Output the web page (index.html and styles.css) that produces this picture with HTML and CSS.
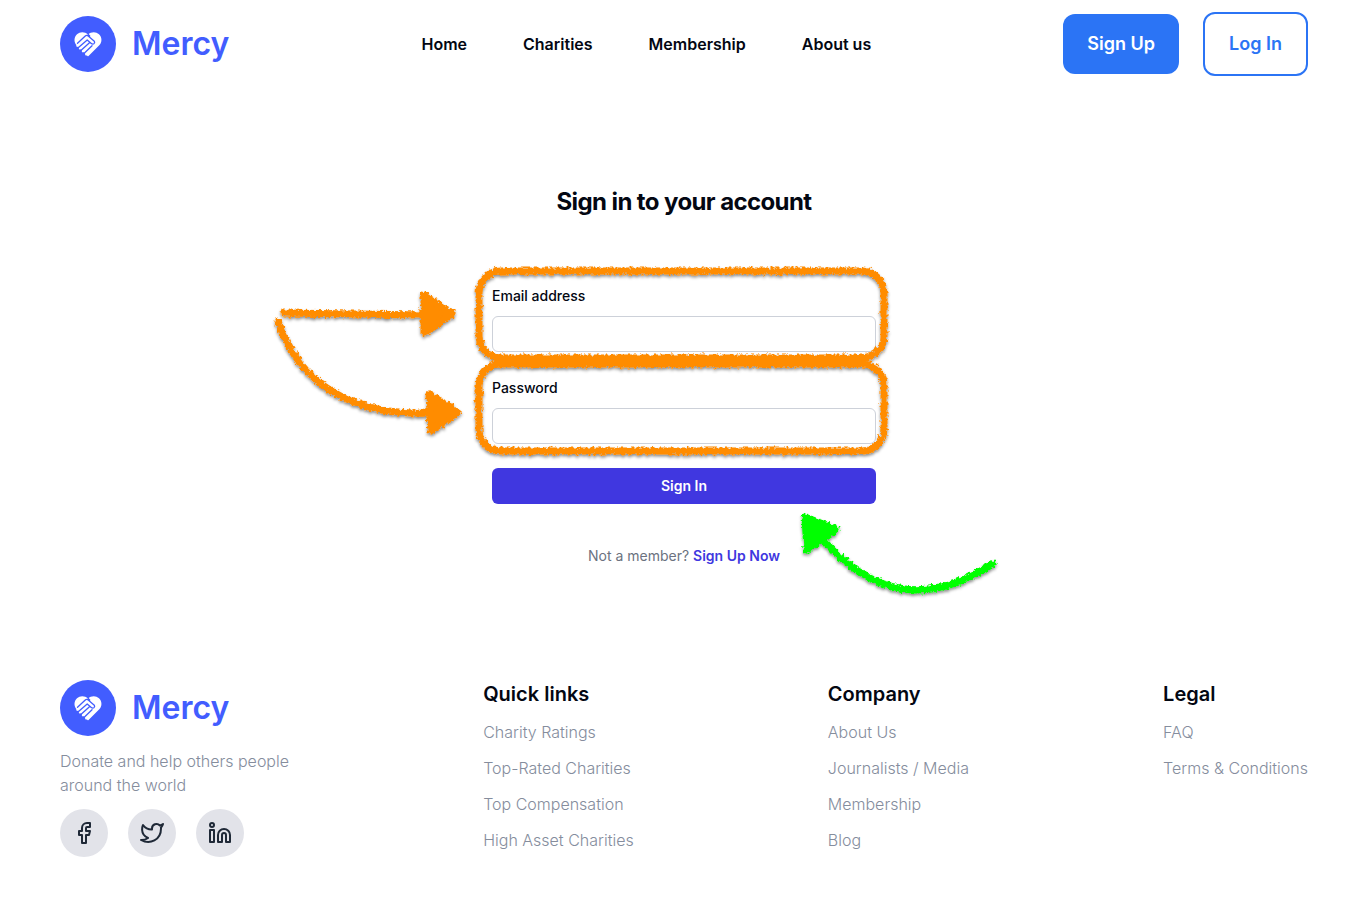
FILE: index.html
```html
<!DOCTYPE html>
<html lang="en">
<head>
<meta charset="utf-8">
<title>Mercy – Sign in</title>
<link rel="stylesheet" href="styles.css">
</head>
<body>
<svg class="defs" width="0" height="0" aria-hidden="true">
  <symbol id="mark" viewBox="0 0 56 56">
    <circle cx="28" cy="28" r="28" fill="#425dff"/>
    <path fill="#fff" d="M27.500 40 16.500 29C13.800 26.200 13.800 21 17 18.200c3-2.800 7.800-2.800 11 .3 3.200-3.100 8-3.100 11-.3 3.200 2.800 3.200 8 .5 10.800L28.500 40q-.5.400-1 0z"/>
    <g fill="none" stroke="#fff" stroke-width="2.200" stroke-linecap="round">
      <path d="m17.300 29.800 3-3M19.900 32.400l3-3M22.900 35.300l3-3M26.200 38.400l3-3"/>
    </g>
    <g fill="none" stroke="#425dff" stroke-width="1.300" stroke-linecap="round" stroke-linejoin="round">
      <path d="M17.500 27.200 25 20.200q1.800-1.500 3.500 0L34.300 25.200q.9 1.500-.4 2.600-1.300.8-2.600-.3L27.200 24l-8.700 7.600M28.200 18.500l1.500 1.500M21.400 34.100l7.800-7.200M24.500 37l7.500-7.200"/>
    </g>
  </symbol>
  <filter id="chalk" x="-10%" y="-20%" width="120%" height="150%">
    <feTurbulence type="fractalNoise" baseFrequency="0.350" numOctaves="2" seed="4" result="noise"/>
    <feDisplacementMap in="SourceGraphic" in2="noise" scale="6" xChannelSelector="R" yChannelSelector="G" result="rough"/>
    <feDropShadow in="rough" dx="0" dy="2" stdDeviation="1.500" flood-color="#000" flood-opacity="0.450"/>
  </filter>
</svg>

<header class="header">
  <a class="logo" href="#"><svg class="logo-mark" aria-hidden="true"><use href="#mark"/></svg><span>Mercy</span></a>
  <nav class="nav">
    <a href="#">Home</a>
    <a href="#">Charities</a>
    <a href="#">Membership</a>
    <a href="#">About us</a>
  </nav>
  <div class="actions">
    <button class="btn btn-solid" type="button">Sign Up</button>
    <button class="btn btn-outline" type="button">Log In</button>
  </div>
</header>

<main class="signin">
  <h1 class="title">Sign in to your account</h1>
  <form class="form">
    <div class="field">
      <label for="email">Email address</label>
      <input id="email" type="email">
    </div>
    <div class="field">
      <label for="password">Password</label>
      <input id="password" type="password">
    </div>
    <button class="submit" type="submit">Sign In</button>
  </form>
  <p class="member">Not a member? <a href="#">Sign Up Now</a></p>
  <svg class="notes" viewBox="264 250 840 360" aria-hidden="true">
    <g class="orange" filter="url(#chalk)">
      <rect x="479" y="271" width="405" height="87" rx="22"/>
      <rect x="479" y="364" width="405" height="87" rx="22"/>
    </g>
    <g class="orange" filter="url(#chalk)">
      <path d="M284 313 425 315M278 321C298 382 350 416 430 413"/>
      <path class="tip" d="M424 295 452 314 424 333zM429 394 458 412 431 431z"/>
    </g>
    <g class="green" filter="url(#chalk)">
      <path d="M992 564Q900 625 825 542"/>
      <path class="tip" d="M805 517 836 529 807 550z"/>
    </g>
  </svg>
</main>

<footer class="footer">
  <div class="about">
    <a class="logo" href="#"><svg class="logo-mark" aria-hidden="true"><use href="#mark"/></svg><span>Mercy</span></a>
    <p class="tagline">Donate and help others people<br>around the world</p>
    <div class="social">
      <a href="#" aria-label="Facebook"><svg viewBox="0 0 24 24"><path d="M18 2h-3a5 5 0 0 0-5 5v3H7v4h3v8h4v-8h3l1-4h-4V7a1 1 0 0 1 1-1h3z"/></svg></a>
      <a href="#" aria-label="Twitter"><svg viewBox="0 0 24 24"><path d="M23 3a10.900 10.900 0 0 1-3.140 1.530 4.480 4.480 0 0 0-7.860 3v1A10.660 10.660 0 0 1 3 4s-4 9 5 13a11.640 11.640 0 0 1-7 2c9 5 20 0 20-11.500a4.500 4.500 0 0 0-.08-.83A7.720 7.720 0 0 0 23 3z"/></svg></a>
      <a href="#" aria-label="LinkedIn"><svg viewBox="0 0 24 24"><path d="M16 8a6 6 0 0 1 6 6v7h-4v-7a2 2 0 0 0-4 0v7h-4v-7a6 6 0 0 1 6-6z"/><path d="M2 9h4v12H2z"/><circle cx="4" cy="4" r="2"/></svg></a>
    </div>
  </div>
  <nav class="links">
    <h2>Quick links</h2>
    <a href="#">Charity Ratings</a>
    <a href="#">Top-Rated Charities</a>
    <a href="#">Top Compensation</a>
    <a href="#">High Asset Charities</a>
  </nav>
  <nav class="links">
    <h2>Company</h2>
    <a href="#">About Us</a>
    <a href="#">Journalists / Media</a>
    <a href="#">Membership</a>
    <a href="#">Blog</a>
  </nav>
  <nav class="links">
    <h2>Legal</h2>
    <a href="#">FAQ</a>
    <a href="#">Terms &amp; Conditions</a>
  </nav>
</footer>
</body>
</html>
```

FILE: styles.css
```css
* { box-sizing: border-box; }

body {
  margin: 0;
  padding: 0 62px 0 60px;
  background: #fff;
  color: #030712;
  font: 16px/24px Inter, "Liberation Sans", sans-serif;
}

h1, h2, p { margin: 0; }
a { color: inherit; text-decoration: none; }
button, input { font: inherit; }
.defs { position: absolute; }

.header {
  display: flex;
  align-items: center;
  justify-content: space-between;
  padding: 12px 0;
}

.logo {
  display: flex;
  align-items: center;
  gap: 16px;
  color: #425dff;
  font-size: 32px;
  line-height: 56px;
  font-weight: 600;
}
.logo-mark { width: 56px; height: 56px; }

.nav { display: flex; gap: 56px; font-weight: 600; }

.actions { display: flex; align-items: center; gap: 24px; }
.btn {
  padding: 16px 24px;
  border: 0;
  border-radius: 12px;
  font-size: 18px;
  line-height: 28px;
  font-weight: 600;
}
.btn-solid { background: #2b74f5; color: #fff; }
.btn-outline { border: 2px solid #2b74f5; background: #fff; color: #2b74f5; }

.signin {
  position: relative;
  display: flex;
  flex-direction: column;
  align-items: center;
  padding: 96px 0 112px;
}
.title {
  font-size: 24px;
  line-height: 36px;
  font-weight: 700;
  letter-spacing: -0.025em;
}
.form {
  display: flex;
  flex-direction: column;
  gap: 24px;
  width: 100%;
  max-width: 384px;
  padding-top: 64px;
  font-size: 14px;
}
.field { display: flex; flex-direction: column; gap: 8px; font-weight: 500; }
.field input {
  height: 36px;
  padding: 6px 12px;
  border: 1px solid #cdd1d9;
  border-radius: 6px;
  background: #fff;
}
.submit {
  height: 36px;
  border: 0;
  border-radius: 6px;
  background: #4037e0;
  color: #fff;
  font-weight: 600;
}
.member { padding-top: 40px; color: #6b7280; font-size: 14px; }
.member a { color: #4037e0; font-weight: 600; }

.notes {
  position: absolute;
  top: 162px;
  left: 50%;
  width: 840px;
  height: 360px;
  margin-left: -420px;
  pointer-events: none;
}
.notes g { fill: none; stroke-width: 7; stroke-linecap: round; stroke-linejoin: round; }
.orange { stroke: #ff8c00; }
.green { stroke: #00ff00; }
.notes .orange .tip { fill: #ff8c00; }
.notes .green .tip { fill: #00ff00; }

.footer {
  display: flex;
  justify-content: space-between;
  padding-bottom: 40px;
}
.tagline { padding: 13px 0 12px; color: #858d9d; font-weight: 300; }
.social { display: flex; gap: 20px; }
.social a {
  display: grid;
  place-items: center;
  width: 48px;
  height: 48px;
  border-radius: 50%;
  background: #e2e3e9;
}
.social svg {
  width: 24px;
  height: 24px;
  fill: none;
  stroke: #1f2937;
  stroke-width: 2;
  stroke-linecap: round;
  stroke-linejoin: round;
}
.links { display: flex; flex-direction: column; gap: 12px; color: #858d9d; font-weight: 300; }
.links h2 { color: #030712; font-size: 20px; line-height: 28px; font-weight: 600; }
```
